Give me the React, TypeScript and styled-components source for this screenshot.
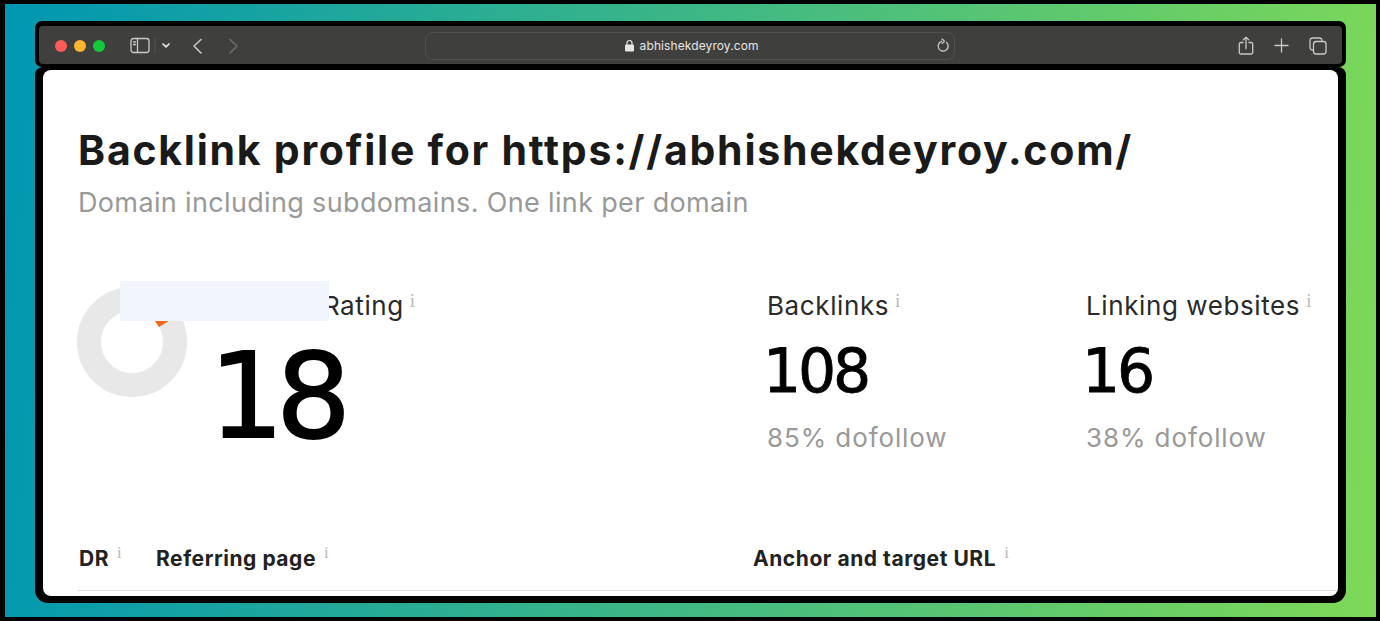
import React from "react";
import styled, { createGlobalStyle } from "styled-components";

const Global = createGlobalStyle`
  html, body { margin: 0; padding: 0; width: 1380px; height: 621px; overflow: hidden; background: #000; }
`;
const Page = styled.div`
  box-sizing: border-box; width: 1380px; height: 621px;
  border: solid #000; border-width: 4px 4px 4px 5px;
  background: linear-gradient(95deg, #0097b2 0%, #7ed957 100%);
  padding: 17px 30px 14px 30px;
  font-family: Inter, "Liberation Sans", sans-serif;
`;
const Frame = styled.div` display: flex; flex-direction: column; height: 100%; `;
const TopFrame = styled.div`
  flex: none; height: 46px; box-sizing: border-box; padding: 5px 4px 3px;
  background: #000; border-radius: 7px;
`;
const SheetFrame = styled.div`
  flex: 1; min-height: 0; display: flex; box-sizing: border-box; padding: 3px 8px 7px;
  background: #000; border-radius: 8px 8px 13px 13px;
`;
const Toolbar = styled.div`
  box-sizing: border-box; height: 38px;
  background: #3f3f3e; border-radius: 4px;
  display: flex; align-items: center; padding: 1px 0 0 15.500px;
`;
const Lights = styled.div` display: flex; gap: 7.300px; `;
const Light = styled.span<{ $c: string }>`
  width: 12px; height: 12px; border-radius: 50%; background: ${p => p.$c};
`;
const NavIcons = styled.div` display: flex; align-items: center; margin-left: 25px; width: 295px; `;
const Address = styled.div`
  box-sizing: border-box; width: 530px; height: 28px; border: 1px solid #505050; border-radius: 8px;
  display: flex; align-items: center; justify-content: center; gap: 5px; position: relative;
  color: #e6e6e6; font-size: 12px; letter-spacing: 0.1px; padding-left: 2px;
`;
const Reload = styled.span` position: absolute; right: 3px; top: 5px; display: flex; `;
const Actions = styled.div` display: flex; align-items: center; margin-left: auto; margin-right: 15px; gap: 20px; `;
const Sheet = styled.div`
  flex: 1; background: #fff; border-radius: 8px; position: relative;
  padding: 53px 0 0 35px; overflow: hidden; min-height: 0;
`;
const Title = styled.h1`
  margin: 0; font-family: Inter, sans-serif; font-weight: 700; font-size: 41px; line-height: 54px;
  letter-spacing: 1.75px; color: #1a1a1a; white-space: nowrap;
`;
const Sub = styled.p`
  margin: 3px 0 0; font-size: 27px; line-height: 46px; color: #999; white-space: nowrap; letter-spacing: 0.35px;
`;
const Stats = styled.div` display: flex; margin-top: 63px; height: 249px; `;
const Donut = styled.svg` flex: none; margin: -3px 0 0 -2px; `;
const Rating = styled.div` width: 549px; margin-left: 30px; `;
const Stat = styled.div<{ $w: number }>` width: ${p => p.$w}px; flex: none; `;
const Label = styled.div`
  font-size: 26px; line-height: 34px; color: #2a2a2a; white-space: nowrap; font-weight: 400; letter-spacing: 0.6px;
`;
const Info = styled.sup`
  font-family: "Liberation Serif", serif; font-size: 19px; color: #bbb;
  margin-left: 6px; vertical-align: 8px; line-height: 0;
`;
const BigNum = styled.div`
  font-family: "DejaVu Sans", sans-serif; font-size: 118px; line-height: 126px; color: #000;
  -webkit-text-stroke: 1.800px #000;
  letter-spacing: -8px; margin: 10px 0 0 -9px;
`;
const Num = styled.div`
  font-family: "DejaVu Sans", sans-serif; font-size: 60px; line-height: 72px; color: #000;
  -webkit-text-stroke: 0.800px #000;
  letter-spacing: -3.200px; margin-left: -4px; margin-top: 12px;
`;
const Note = styled.div`
  font-size: 26px; line-height: 40px; color: #999; letter-spacing: 0.9px; white-space: nowrap; margin-top: 11px;
`;
const Patch = styled.div`
  position: absolute; left: 77px; top: 211px; width: 209px; height: 40px; background: #f3f5fe;
`;
const TableHead = styled.div`
  display: flex; align-items: center; height: 40px; border-bottom: 1px solid #e2e2e2;
  box-sizing: content-box; padding-bottom: 12px;
`;
const Col = styled.div<{ $w: number }>`
  width: ${p => p.$w}px; flex: none; font-weight: 700; font-size: 21px; color: #222; white-space: nowrap;
  letter-spacing: 0.55px; padding-left: 1px; box-sizing: border-box;
`;
const ColInfo = styled(Info)` font-size: 17px; font-weight: 400; margin-left: 8px; `;

const Ic = { fill: "none", stroke: "#c9c9c9", strokeWidth: 1.3, strokeLinecap: "round" as const, strokeLinejoin: "round" as const };

export default function App() {
  return (
    <Page>
      <Global />
      <Frame>
        <TopFrame>
          <Toolbar>
            <Lights>
              <Light $c="#fc5b57" />
              <Light $c="#fdb62f" />
              <Light $c="#13c83c" />
            </Lights>
            <NavIcons>
              <svg width="62" height="20" viewBox="0 0 62 20">
                <rect x="1" y="2.500" width="18" height="14" rx="2.500" {...Ic} />
                <path d="M7.500 2.500v14" {...Ic} />
                <path d="M3.500 6h2M3.500 8.500h2" {...Ic} />
                <path d="M25 2v16" stroke="#555" strokeWidth="1" />
                <path d="M33 8l3 2.800L39 8" {...Ic} stroke="#e6e6e6" strokeWidth="1.700" />
              </svg>
              <svg width="70" height="20" viewBox="0 0 70 20" style={{ marginLeft: -4 }}>
                <path d="M13 3.500L6 10l7 7" {...Ic} strokeWidth="1.600" />
                <path d="M42 3.500l7 6.500-7 7" {...Ic} stroke="#6d6d6d" strokeWidth="1.600" />
              </svg>
            </NavIcons>
            <Address>
              <svg width="11" height="13" viewBox="0 0 11 13">
                <path d="M3 6V4a2.500 2.500 0 0 1 5 0v2" fill="none" stroke="#e6e6e6" strokeWidth="1.200" />
                <rect x="1" y="5.500" width="9" height="7" rx="1.200" fill="#e6e6e6" />
              </svg>
              abhishekdeyroy.com
              <Reload>
                <svg width="16" height="16" viewBox="0 0 16 16">
                  <path d="M11.600 4.500A5 5 0 1 1 6.500 3.400" {...Ic} />
                  <path d="M7 1l2.500 2.200L7 5.400" {...Ic} />
                </svg>
              </Reload>
            </Address>
            <Actions>
              <svg width="16" height="19" viewBox="0 0 16 19">
                <path d="M5 6.500H2.800A1.500 1.500 0 0 0 1.300 8v8.500A1.500 1.500 0 0 0 2.800 18h10.400a1.500 1.500 0 0 0 1.500-1.500V8a1.500 1.500 0 0 0-1.500-1.500H11" {...Ic} />
                <path d="M8 12.500V1.300M5.200 3.900L8 1.200l2.800 2.700" {...Ic} />
              </svg>
              <svg width="15" height="15" viewBox="0 0 15 15">
                <path d="M7.500 1v13M1 7.500h13" {...Ic} />
              </svg>
              <svg width="18" height="18" viewBox="0 0 18 18">
                <path d="M3.500 13A2.500 2.500 0 0 1 1 10.500V3.500A2.500 2.500 0 0 1 3.500 1h7A2.500 2.500 0 0 1 13 3.500" {...Ic} />
                <rect x="4.500" y="4.500" width="12.500" height="12.500" rx="2.500" {...Ic} />
              </svg>
            </Actions>
          </Toolbar>
        </TopFrame>
        <SheetFrame>
          <Sheet>
            <Title>Backlink profile for https://abhishekdeyroy.com/</Title>
            <Sub>Domain including subdomains. One link per domain</Sub>
            <Stats>
              <Donut width="112" height="112" viewBox="0 0 112 112">
                <circle cx="56" cy="56" r="43" fill="none" stroke="#e8e8e8" strokeWidth="24" />
                <path d="M74 28L104 28L83 41Z" fill="#f26a1b" />
              </Donut>
              <Rating>
                <Label>Domain Rating<Info>i</Info></Label>
                <BigNum>18</BigNum>
              </Rating>
              <Stat $w={319}>
                <Label>Backlinks<Info>i</Info></Label>
                <Num>108</Num>
                <Note>85% dofollow</Note>
              </Stat>
              <Stat $w={240}>
                <Label>Linking websites<Info>i</Info></Label>
                <Num>16</Num>
                <Note>38% dofollow</Note>
              </Stat>
            </Stats>
            <TableHead>
              <Col $w={77}>DR<ColInfo>i</ColInfo></Col>
              <Col $w={597}>Referring page<ColInfo>i</ColInfo></Col>
              <Col $w={400}>Anchor and target URL<ColInfo>i</ColInfo></Col>
            </TableHead>
            <Patch />
          </Sheet>
        </SheetFrame>
      </Frame>
    </Page>
  );
}
